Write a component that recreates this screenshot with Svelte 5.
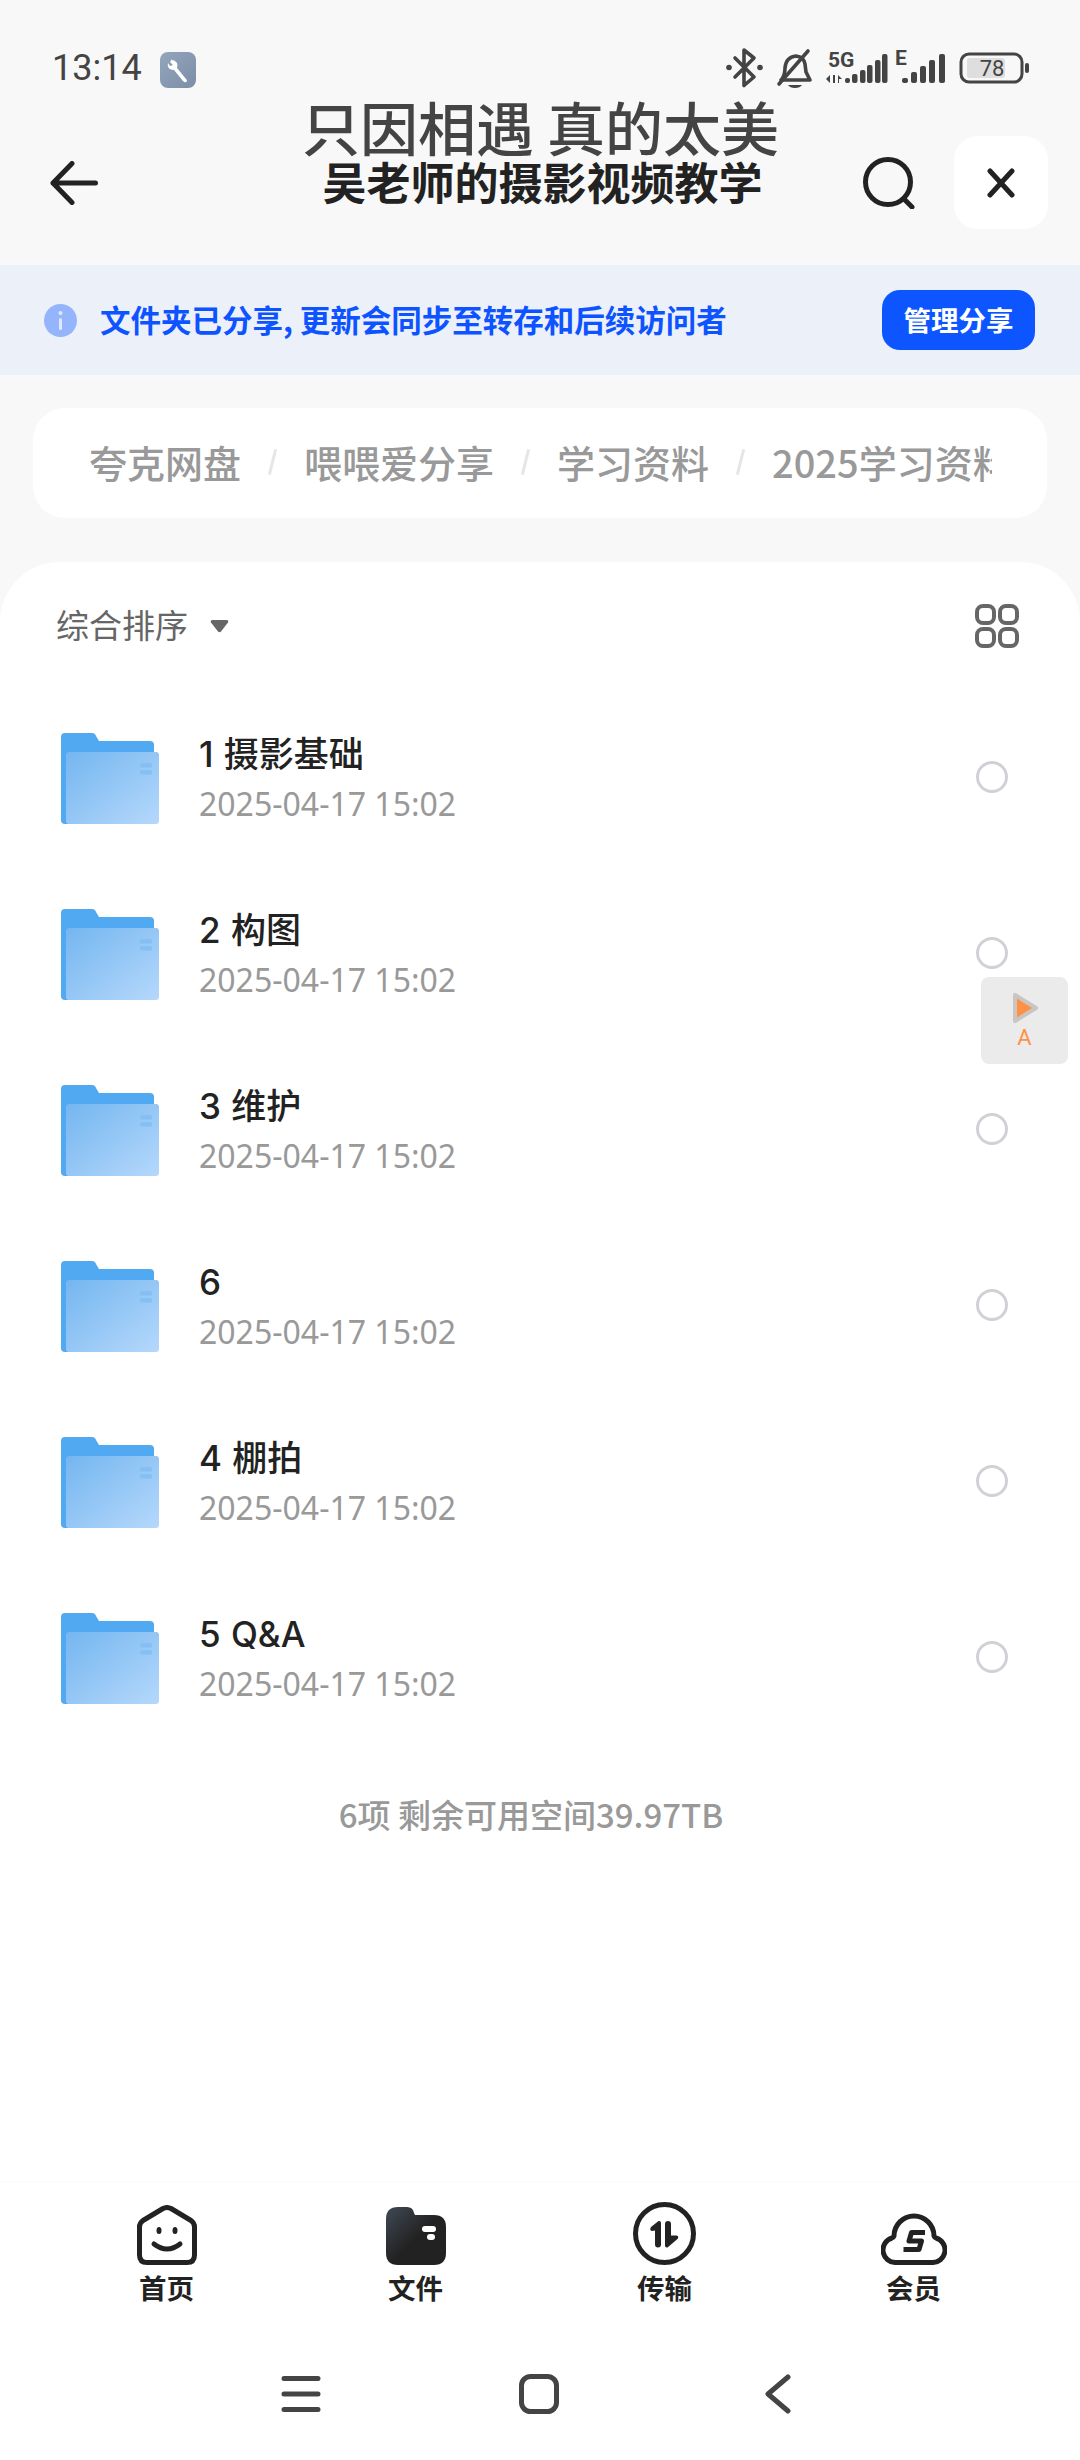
<script>
	const crumbs = ['夸克网盘', '喂喂爱分享', '学习资料', '2025学习资料'];
	const folders = ['1 摄影基础', '2 构图', '3 维护', '6', '4 棚拍', '5 Q&A'];
	const date = '2025-04-17 15:02';
	const tabs = ['首页', '文件', '传输', '会员'];
</script>

<div class="page">
	<div class="status">
		<span class="time">13:14</span>
		<svg class="wrench" width="36" height="36" viewBox="0 0 36 36">
			<defs>
				<linearGradient id="wr" x1="0" y1="0" x2="1" y2="1">
					<stop offset="0" stop-color="#93a6bc" />
					<stop offset="1" stop-color="#7c8ea6" />
				</linearGradient>
			</defs>
			<rect width="36" height="36" rx="8" fill="url(#wr)" />
			<path d="M12 7 l-2 3 l3 3 l-3 1 l-2 -3 q-1 4 2 6 q2 1 4 1 l9 11 q2 2 3 1 q2 -1 0 -3 l-9 -11 q1 -3 0 -5 q-2 -3 -5 -3z" fill="#fff" />
		</svg>
		<svg class="icons" width="310" height="48" viewBox="724 44 310 48">
			<g fill="none" stroke="#444" stroke-width="3.6" stroke-linejoin="round" stroke-linecap="round">
				<path d="M735 58 L754 77 L744 85.5 V50 L754 58 L735 77" />
				<path d="M781 80 Q785 76 785 68 Q786 57 796 56 Q804 57 805 64 L806 72 L810 80 Z" />
				<path d="M779 84 L808 51" />
			</g>
			<circle cx="729" cy="67.500" r="2.800" fill="#444" />
			<circle cx="760" cy="67.500" r="2.800" fill="#444" />
			<path d="M788 85 h14 q-2 3 -7 3 q-5 0 -7 -3z" fill="#444" />
			<text x="828" y="67" class="net">5G</text>
			<path d="M826 79 l4 -4 v8z M833 75 h2 v8 h-2z M838 75 l4 4 h-3 v4 h-1z" fill="#444" />
			<g fill="#444">
				<rect x="845" y="78" width="5" height="5" rx="2" />
				<rect x="852" y="74" width="5.500" height="9" rx="2" />
				<rect x="860" y="70" width="5.500" height="13" rx="2" />
				<rect x="867" y="65" width="5.500" height="18" rx="2" />
				<rect x="875" y="60" width="5.500" height="23" rx="2" />
				<rect x="882" y="54" width="5.500" height="29" rx="2" />
				<rect x="902" y="78" width="6" height="5" rx="2" />
				<rect x="911" y="72" width="6" height="11" rx="2" />
				<rect x="920" y="66" width="6" height="17" rx="2" />
				<rect x="929" y="60" width="6" height="23" rx="2" />
				<rect x="939" y="54" width="6" height="29" rx="2" />
			</g>
			<text x="895" y="65" class="net">E</text>
			<rect x="961" y="54" width="61" height="28" rx="8" fill="none" stroke="#444" stroke-width="3" />
			<rect x="967" y="58" width="38" height="20" rx="3" fill="#dedede" />
			<text x="992" y="76" class="batt" text-anchor="middle">78</text>
			<rect x="1025" y="63" width="4" height="10" rx="2" fill="#444" />
		</svg>
	</div>

	<header class="header">
		<svg class="back" width="48" height="44" viewBox="0 0 48 44" fill="none" stroke="#222" stroke-width="5" stroke-linecap="round" stroke-linejoin="round">
			<path d="M45.500 22 H3 M22 2.500 L3 22 L22 41.500" />
		</svg>
		<div class="titles">
			<div class="title">只因相遇 真的太美</div>
			<div class="subtitle">吴老师的摄影视频教学</div>
		</div>
		<svg class="search" width="54" height="52" viewBox="0 0 54 52" fill="none" stroke="#222" stroke-width="5" stroke-linecap="round">
			<circle cx="26" cy="25" r="22.500" />
			<path d="M42 42 L50 50" />
		</svg>
		<div class="close">
			<svg width="28" height="30" viewBox="0 0 28 30" fill="none" stroke="#222" stroke-width="5" stroke-linecap="round">
				<path d="M3 3 L25 27 M25 3 L3 27" />
			</svg>
		</div>
	</header>

	<div class="banner">
		<svg width="33" height="33" viewBox="0 0 33 33">
			<circle cx="16.500" cy="16.500" r="16.500" fill="#94b4fb" />
			<rect x="15" y="14" width="3" height="12" rx="1.500" fill="#dfe8fd" />
			<circle cx="16.500" cy="9" r="2" fill="#dfe8fd" />
		</svg>
		<span class="banner-text">文件夹已分享, 更新会同步至转存和后续访问者</span>
		<span class="manage">管理分享</span>
	</div>

	<nav class="crumbs">
		<div class="crumbs-inner">
			{#each crumbs as crumb, i}
				{#if i > 0}<i class="sep"></i>{/if}
				<span>{crumb}</span>
			{/each}
		</div>
	</nav>

	<main class="sheet">
		<div class="sortbar">
			<span class="sort">综合排序</span>
			<svg class="caret" width="19" height="14" viewBox="0 0 19 14"><path d="M2.500 1 H16.500 Q19 1 18 3.500 L11 12.500 Q9.500 14 8 12.500 L1 3.500 Q0 1 2.500 1z" fill="#666" /></svg>
			<svg class="grid" width="44" height="44" viewBox="0 0 44 44" fill="none" stroke="#666" stroke-width="4">
				<rect x="2" y="2" width="17" height="17" rx="6" />
				<rect x="25" y="2" width="17" height="17" rx="6" />
				<rect x="2" y="25" width="17" height="17" rx="6" />
				<rect x="25" y="25" width="17" height="17" rx="6" />
			</svg>
		</div>

		<ul class="list">
			{#each folders as name, i}
				<li class="row">
					<svg class="folder" width="98" height="91" viewBox="0 0 98 91">
						<defs>
							<linearGradient id="fold{i}" x1="0" y1="0" x2="1" y2="1">
								<stop offset="0" stop-color="#74b6f0" />
								<stop offset="1" stop-color="#b5d8fb" />
							</linearGradient>
						</defs>
						<path d="M4 0 H31 Q34 0 35 3 L38 8 H89 Q93 8 93 12 V87 Q93 91 89 91 H4 Q0 91 0 87 V4 Q0 0 4 0z" fill="#50a9f1" />
						<path d="M8 19 H95 Q98 19 98 22 V88 Q98 91 95 91 H8 Q5 91 5 88 V22 Q5 19 8 19z" fill="url(#fold{i})" />
						<rect x="79" y="30" width="12" height="4.500" rx="1.500" fill="#85c0f4" />
						<rect x="79" y="37" width="12" height="4.500" rx="1.500" fill="#85c0f4" />
					</svg>
					<div class="info">
						<div class="name">{name}</div>
						<div class="date">{date}</div>
					</div>
					<span class="radio"></span>
				</li>
			{/each}
		</ul>

		<p class="summary">6项 剩余可用空间39.97TB</p>

		<div class="float">
			<svg width="28" height="32" viewBox="0 0 28 32">
				<path d="M4 3 L25 16 L4 29z" fill="#ff9147" stroke="#c9c5c1" stroke-width="4" stroke-linejoin="round" />
			</svg>
			<span>A</span>
		</div>

		<div class="tabbar">
			{#each tabs as tab, i}
				<div class="tab">
					<div class="tab-icon">
						{#if i === 0}
							<svg width="60" height="60" viewBox="0 0 60 60" fill="none" stroke="#222" stroke-width="5" stroke-linecap="round">
								<path d="M26 3.500 Q30 1.500 34 3.500 L54 15.500 Q57.500 18 57.500 22 V50 Q57.500 57.500 50 57.500 H10 Q2.500 57.500 2.500 50 V22 Q2.500 18 6 15.500z" stroke-linejoin="round" />
								<path d="M17 39 Q30 49 43 39" />
								<ellipse cx="22" cy="25.500" rx="2.500" ry="3.500" fill="#222" stroke="none" />
								<ellipse cx="38" cy="25.500" rx="2.500" ry="3.500" fill="#222" stroke="none" />
							</svg>
						{:else if i === 1}
							<svg width="60" height="58" viewBox="0 0 60 58">
								<defs>
									<linearGradient id="ff" x1="0.100" y1="0.100" x2="0.700" y2="0.700">
										<stop offset="0" stop-color="#3b424c" />
										<stop offset="0.700" stop-color="#222" />
									</linearGradient>
								</defs>
								<path d="M12 0 H21 Q27 0 28 6 L29 8 H48 Q60 8 60 20 V46 Q60 58 48 58 H12 Q0 58 0 46 V12 Q0 0 12 0z" fill="url(#ff)" />
								<rect x="36" y="19" width="14" height="6" rx="3" fill="#fff" />
								<rect x="41" y="27" width="8" height="6" rx="3" fill="#fff" />
							</svg>
						{:else if i === 2}
							<svg width="63" height="63" viewBox="0 0 63 63">
								<circle cx="31.500" cy="31.500" r="29" fill="none" stroke="#222" stroke-width="5" />
								<path d="M28 42.500 V21 Q28 18.500 25.500 19 L18 25 Q16 28.500 19 29 L22 28.500 V42.500 Q22 45.500 25 45.500 Q28 45.500 28 42.500z" fill="#222" />
								<path d="M32 22 V43.500 Q32 46 34.500 45.500 L44.500 37 Q46.500 34 43.500 33.500 L38 33.500 V22 Q38 19 35 19 Q32 19 32 22z" fill="#222" />
							</svg>
						{:else}
							<svg width="66" height="54" viewBox="0 0 66 54" fill="none" stroke="#222" stroke-width="5" stroke-linejoin="round">
								<path d="M15 51.500 H51 A12.500 12.500 0 0 0 55 27 Q53.500 26.500 53 25 A20 20 0 0 0 13 25 Q12.500 26.500 11 27 A12.500 12.500 0 0 0 15 51.500z" />
								<path d="M44 21.500 H30.500 L28 30 H40.500 L38 38.500 H22.500" stroke-width="5" />
							</svg>
						{/if}
					</div>
					<span>{tab}</span>
				</div>
			{/each}
		</div>

		<div class="sysnav">
			<svg width="40" height="38" viewBox="0 0 40 38" stroke="#444" stroke-width="5" stroke-linecap="round">
				<path d="M3 3.500 H37 M3 19 H37 M3 34.500 H37" />
			</svg>
			<svg class="home" width="40" height="40" viewBox="0 0 40 40" fill="none" stroke="#444" stroke-width="5">
				<rect x="2.500" y="2.500" width="35" height="35" rx="9" />
			</svg>
			<svg width="26" height="40" viewBox="0 0 26 40" fill="none" stroke="#444" stroke-width="5" stroke-linecap="round" stroke-linejoin="round">
				<path d="M23 3 L3 20 L23 37" />
			</svg>
		</div>
	</main>
</div>

<style>
	:global(body) {
		margin: 0;
		background: #f8f8f8;
	}

	.page {
		width: 1080px;
		height: 2460px;
		display: flex;
		flex-direction: column;
		font-family: 'Noto Sans CJK SC', 'Noto Sans', sans-serif;
		background: #f8f8f8;
		overflow: hidden;
	}

	.status {
		height: 100px;
		box-sizing: border-box;
		padding: 50px 0 0 52px;
		display: flex;
		align-items: flex-start;
	}

	.time {
		font-family: Roboto, sans-serif;
		font-size: 36px;
		line-height: 36px;
		color: #444;
		width: 108px;
	}

	.wrench {
		margin-top: 2px;
	}

	.icons {
		margin: -6px 0 0 528px;
	}

	.net {
		font-family: Roboto, sans-serif;
		font-size: 21px;
		font-weight: 700;
		fill: #444;
	}

	.batt {
		font-family: Roboto, sans-serif;
		font-size: 22px;
		fill: #444;
	}

	.header {
		height: 165px;
		display: flex;
		align-items: center;
		padding-left: 50px;
		box-sizing: border-box;
	}

	.back {
		flex: none;
	}

	.titles {
		width: 764px;
		box-sizing: border-box;
		padding-left: 121px;
		text-align: center;
		align-self: flex-start;
		margin-top: -7px;
	}

	.title {
		font-size: 58px;
		line-height: 66px;
		font-weight: 500;
		color: #444;
		white-space: nowrap;
	}

	.subtitle {
		font-size: 44px;
		line-height: 50px;
		margin-top: -3px;
		padding-left: 4px;
		font-weight: 700;
		color: #222;
		white-space: nowrap;
	}

	.search {
		flex: none;
	}

	.close {
		width: 94px;
		height: 93px;
		margin-left: 38px;
		background: #fff;
		border-radius: 24px;
		display: flex;
		align-items: center;
		justify-content: center;
	}

	.banner {
		height: 110px;
		background: #ebf0f9;
		display: flex;
		align-items: center;
		padding: 0 45px 0 44px;
	}

	.banner-text {
		margin-left: 23px;
		font-size: 30.500px;
		line-height: 40px;
		margin-bottom: 3px;
		font-weight: 700;
		color: #0d53ff;
		white-space: nowrap;
	}

	.manage {
		margin-left: auto;
		width: 153px;
		height: 60px;
		line-height: 58px;
		text-align: center;
		border-radius: 18px;
		background: #0d55ff;
		color: #fff;
		font-size: 27.500px;
		font-weight: 700;
	}

	.crumbs {
		margin: 33px 33px 0;
		height: 110px;
		flex: none;
		box-sizing: border-box;
		padding: 0 55px 3px 56px;
		background: #fff;
		border-radius: 32px;
		display: flex;
		align-items: center;
	}

	.crumbs-inner {
		flex: 1;
		min-width: 0;
		display: flex;
		align-items: center;
		overflow: hidden;
		white-space: nowrap;
		font-size: 38px;
		font-weight: 500;
		color: #999;
	}

	.crumbs-inner span {
		flex: none;
	}

	.sep {
		flex: none;
		width: 3px;
		height: 26px;
		margin: 0 30px;
		background: #e6e6e6;
		transform: rotate(14deg);
	}

	.sheet {
		margin-top: 44px;
		flex: 1;
		position: relative;
		background: #fff;
		border-radius: 60px 60px 0 0;
		display: flex;
		flex-direction: column;
	}

	.sortbar {
		height: 128px;
		flex: none;
		box-sizing: border-box;
		padding: 0 61px 0 56px;
		display: flex;
		align-items: center;
	}

	.sort {
		font-size: 33px;
		line-height: 44px;
		margin-bottom: 5px;
		color: #666;
	}

	.caret {
		margin-left: 22px;
	}

	.grid {
		margin-left: auto;
	}

	.list {
		list-style: none;
		margin: 0;
		padding: 0;
	}

	.row {
		height: 176px;
		box-sizing: border-box;
		padding: 0 72px 0 61px;
		display: flex;
		align-items: center;
	}

	.folder {
		flex: none;
	}

	.info {
		margin-left: 40px;
		flex: 1;
	}

	.name {
		font-family: Inter, 'Noto Sans CJK SC', sans-serif;
		font-size: 35px;
		line-height: 46px;
		font-weight: 500;
		color: #222;
		margin-top: -1px;
		word-spacing: 1px;
	}

	.date {
		margin-top: 7px;
		font-family: 'Noto Sans', sans-serif;
		font-size: 32px;
		line-height: 40px;
		color: #999;
	}

	.radio {
		width: 32px;
		height: 32px;
		box-sizing: border-box;
		border: 3px solid #d0d1d6;
		border-radius: 50%;
		margin-bottom: 2px;
	}

	.summary {
		margin: 44px 0 0;
		padding-right: 18px;
		text-align: center;
		font-size: 33px;
		font-weight: 500;
		color: #999;
	}

	.float {
		position: absolute;
		left: 981px;
		top: 415px;
		width: 87px;
		height: 87px;
		background: #ebebeb;
		border-radius: 8px;
		display: flex;
		flex-direction: column;
		align-items: center;
		padding-top: 15px;
		box-sizing: border-box;
		color: #ff9147;
		font-family: Roboto, sans-serif;
		font-size: 22px;
		line-height: 28px;
	}

	.tabbar {
		height: 279px;
		box-sizing: border-box;
		padding: 19px 42px 0;
		display: flex;
		align-items: flex-start;
		border-top: 1px solid #fafafa;
		position: absolute;
		left: 0;
		right: 0;
		bottom: 0;
	}

	.tab {
		flex: 1;
		display: flex;
		flex-direction: column;
		align-items: center;
		font-size: 27.500px;
		font-weight: 700;
		color: #222;
	}

	.tab-icon {
		height: 64px;
		display: flex;
		align-items: flex-end;
	}

	.tab span {
		margin-top: 4px;
		line-height: 36px;
	}

	.sysnav {
		position: absolute;
		left: 281px;
		bottom: 46px;
		display: flex;
		align-items: center;
	}

	.home {
		margin: 0 206px 0 198px;
	}
</style>
